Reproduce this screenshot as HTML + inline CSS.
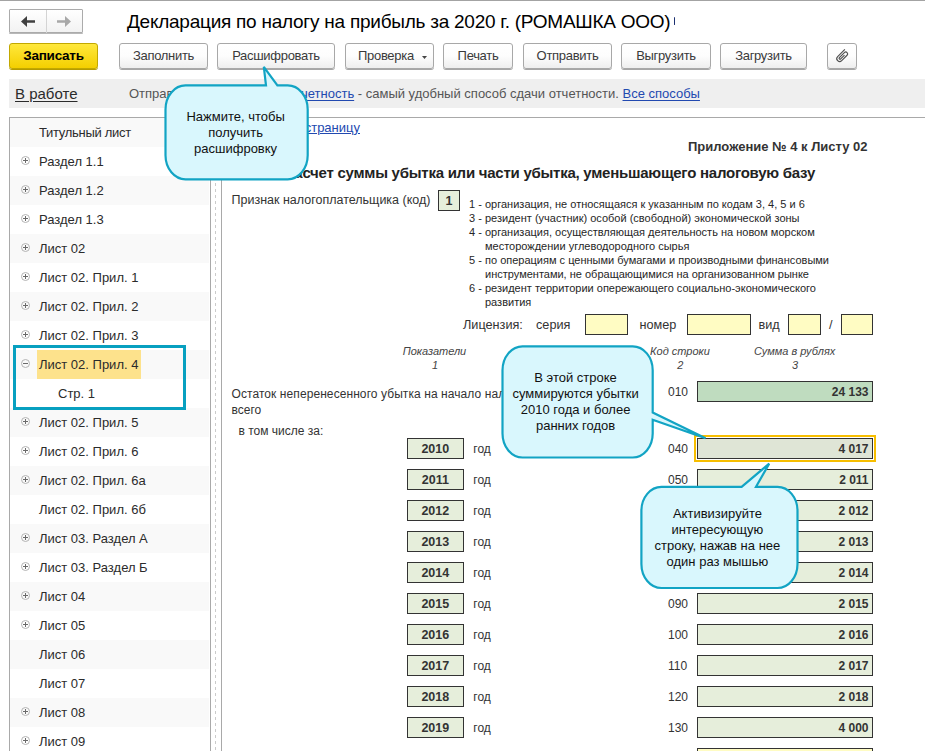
<!DOCTYPE html>
<html><head><meta charset="utf-8">
<style>
*{box-sizing:border-box;margin:0;padding:0}
html,body{width:925px;height:751px;overflow:hidden;background:#fff}
body{position:relative;font-family:"Liberation Sans",sans-serif;color:#333;font-size:13px}
.a{position:absolute;white-space:pre}
.nav{left:9px;top:9px;width:74px;height:24px;border:1px solid #ababab;border-radius:1px;background:linear-gradient(#fff,#f2f2f2);box-shadow:0 1px 0 #b8b8b8}
.btn{position:absolute;top:43px;height:26px;border:1px solid #a8a8a8;border-radius:3px;background:linear-gradient(#fff 0%,#fdfdfd 50%,#eeeeee 100%);box-shadow:0 1px 0 #a6a6a6;font-size:13px;line-height:24px;text-align:center;color:#3a3a3a;white-space:pre;letter-spacing:-0.3px}
.save{background:linear-gradient(#ffe83c,#f4cf00);border-color:#c2a800;color:#000;font-weight:bold;box-shadow:0 1px 0 #b69c00;letter-spacing:-0.25px;font-size:13.5px}
.link{color:#2249b0;text-decoration:underline}
.icon{position:absolute;width:10px;height:10px}
.icon svg{display:block}

</style></head><body>
<div class="a" style="left:0;top:0;width:925px;height:1px;background:#a3a3a3"></div>
<div class="a nav"></div>
<div class="a" style="left:46px;top:10px;width:1px;height:23px;background:#d4d4d4"></div>
<svg class="a" style="left:0;top:0" width="100" height="40">
<path d="M21 21.5 L27 16 L27 20.2 L35 20.2 L35 22.8 L27 22.8 L27 27 Z" fill="#404040"/>
<path d="M71 21.5 L65 16 L65 20.2 L57 20.2 L57 22.8 L65 22.8 L65 27 Z" fill="#a8a8a8"/>
</svg>
<div class="a" style="left:674px;top:17px;width:1.4px;height:8px;background:#1b2f70;border-radius:1px"></div>
<div class="a" style="left:127px;top:11.62px;font-size:19px;line-height:20px;color:#000;font-weight:400;font-style:normal;letter-spacing:-0.25px">Декларация по налогу на прибыль за 2020 г. (РОМАШКА ООО)</div>
<div class="btn save" style="left:9px;width:89px">Записать</div>
<div class="btn" style="left:119px;width:89px">Заполнить</div>
<div class="btn" style="left:217px;width:118px">Расшифровать</div>
<div class="btn" style="left:443px;width:70px">Печать</div>
<div class="btn" style="left:523px;width:89px">Отправить</div>
<div class="btn" style="left:621px;width:90px">Выгрузить</div>
<div class="btn" style="left:720px;width:87px">Загрузить</div>
<div class="btn" style="left:345px;width:89px;text-align:left;padding-left:12px">Проверка<svg style="position:absolute;left:76px;top:12px" width="6" height="4"><path d="M0 0 L5 0 L2.5 3 Z" fill="#444"/></svg></div>
<div class="btn" style="left:827px;width:30px"></div>
<svg class="a" style="left:0;top:0" width="925" height="100"><g transform="translate(841.9 56.2) rotate(45) translate(-3 -6.6)" fill="none" stroke="#505050" stroke-width="1.15"><path d="M0.3 -0.3 V9.9 A2.85 2.85 0 0 0 6 9.9 V2.3 A1.9 1.9 0 0 0 2.2 2.3 V9.4 A0.95 0.95 0 0 0 4.1 9.4 V4"/></g></svg>
<div class="a" style="left:9px;top:79px;width:916px;height:29px;background:#efefef"></div>
<div class="a" style="left:15px;top:83.80px;font-size:15px;line-height:20px;color:#2b2b2b;font-weight:400;font-style:normal;"><span style="text-decoration:underline;text-underline-offset:2px">В работе</span></div>
<div class="a" style="left:129px;top:84.00px;font-size:13px;line-height:20px;color:#555;font-weight:400;font-style:normal;">Отправляйте через 1С-Отчетность</div>
<div class="a" style="left:301px;top:84.00px;font-size:13px;line-height:20px;color:#555;font-weight:400;font-style:normal;background:#efefef"><span class="link" style="text-underline-offset:2px">четность</span> - самый удобный способ сдачи отчетности. <span class="link" style="text-underline-offset:2px">Все способы</span></div>
<div class="a" style="left:9px;top:117px;width:916px;height:1px;background:#a9a9a9"></div>
<div class="a" style="left:9px;top:117px;width:1px;height:640px;background:#a9a9a9"></div>
<div class="a" style="left:210px;top:117px;width:1px;height:640px;background:#a9a9a9"></div>
<div class="a" style="left:221px;top:117px;width:1px;height:640px;background:#a9a9a9"></div>
<div class="a" style="left:215px;top:118px;width:1px;height:640px;background:repeating-linear-gradient(#cbcbcb 0 2px,transparent 2px 5px,#cbcbcb 5px 6px)"></div>
<div class="a" style="left:10px;top:118px;width:199px;height:29px;background:#f9f9f9"></div>
<div class="a" style="left:39px;top:122.50px;font-size:13px;line-height:20px;color:#2b2b2b;font-weight:400;font-style:normal;letter-spacing:-0.3px">Титульный лист</div>
<svg class="a" style="left:20px;top:155px" width="11" height="11"><circle cx="5.5" cy="5.5" r="4" fill="none" stroke="#b4b4b4" stroke-width="1"/><path d="M3 5.5 H8" stroke="#6a6a6a" stroke-width="1"/><path d="M5.5 3 V8" stroke="#6a6a6a" stroke-width="1"/></svg>
<div class="a" style="left:39px;top:151.50px;font-size:13px;line-height:20px;color:#2b2b2b;font-weight:400;font-style:normal;">Раздел 1.1</div>
<div class="a" style="left:10px;top:176px;width:199px;height:29px;background:#f9f9f9"></div>
<svg class="a" style="left:20px;top:184px" width="11" height="11"><circle cx="5.5" cy="5.5" r="4" fill="none" stroke="#b4b4b4" stroke-width="1"/><path d="M3 5.5 H8" stroke="#6a6a6a" stroke-width="1"/><path d="M5.5 3 V8" stroke="#6a6a6a" stroke-width="1"/></svg>
<div class="a" style="left:39px;top:180.50px;font-size:13px;line-height:20px;color:#2b2b2b;font-weight:400;font-style:normal;">Раздел 1.2</div>
<svg class="a" style="left:20px;top:213px" width="11" height="11"><circle cx="5.5" cy="5.5" r="4" fill="none" stroke="#b4b4b4" stroke-width="1"/><path d="M3 5.5 H8" stroke="#6a6a6a" stroke-width="1"/><path d="M5.5 3 V8" stroke="#6a6a6a" stroke-width="1"/></svg>
<div class="a" style="left:39px;top:209.50px;font-size:13px;line-height:20px;color:#2b2b2b;font-weight:400;font-style:normal;">Раздел 1.3</div>
<div class="a" style="left:10px;top:234px;width:199px;height:29px;background:#f9f9f9"></div>
<svg class="a" style="left:20px;top:242px" width="11" height="11"><circle cx="5.5" cy="5.5" r="4" fill="none" stroke="#b4b4b4" stroke-width="1"/><path d="M3 5.5 H8" stroke="#6a6a6a" stroke-width="1"/><path d="M5.5 3 V8" stroke="#6a6a6a" stroke-width="1"/></svg>
<div class="a" style="left:39px;top:238.50px;font-size:13px;line-height:20px;color:#2b2b2b;font-weight:400;font-style:normal;">Лист 02</div>
<svg class="a" style="left:20px;top:271px" width="11" height="11"><circle cx="5.5" cy="5.5" r="4" fill="none" stroke="#b4b4b4" stroke-width="1"/><path d="M3 5.5 H8" stroke="#6a6a6a" stroke-width="1"/><path d="M5.5 3 V8" stroke="#6a6a6a" stroke-width="1"/></svg>
<div class="a" style="left:39px;top:267.50px;font-size:13px;line-height:20px;color:#2b2b2b;font-weight:400;font-style:normal;">Лист 02. Прил. 1</div>
<div class="a" style="left:10px;top:292px;width:199px;height:29px;background:#f9f9f9"></div>
<svg class="a" style="left:20px;top:300px" width="11" height="11"><circle cx="5.5" cy="5.5" r="4" fill="none" stroke="#b4b4b4" stroke-width="1"/><path d="M3 5.5 H8" stroke="#6a6a6a" stroke-width="1"/><path d="M5.5 3 V8" stroke="#6a6a6a" stroke-width="1"/></svg>
<div class="a" style="left:39px;top:296.50px;font-size:13px;line-height:20px;color:#2b2b2b;font-weight:400;font-style:normal;">Лист 02. Прил. 2</div>
<svg class="a" style="left:20px;top:329px" width="11" height="11"><circle cx="5.5" cy="5.5" r="4" fill="none" stroke="#b4b4b4" stroke-width="1"/><path d="M3 5.5 H8" stroke="#6a6a6a" stroke-width="1"/><path d="M5.5 3 V8" stroke="#6a6a6a" stroke-width="1"/></svg>
<div class="a" style="left:39px;top:325.50px;font-size:13px;line-height:20px;color:#2b2b2b;font-weight:400;font-style:normal;">Лист 02. Прил. 3</div>
<div class="a" style="left:10px;top:350px;width:199px;height:29px;background:#f9f9f9"></div>
<div class="a" style="left:37px;top:350px;width:104px;height:29px;background:#fde28c"></div>
<svg class="a" style="left:20px;top:358px" width="11" height="11"><circle cx="5.5" cy="5.5" r="4" fill="none" stroke="#b4b4b4" stroke-width="1"/><path d="M3 5.5 H8" stroke="#6a6a6a" stroke-width="1"/></svg>
<div class="a" style="left:39px;top:354.50px;font-size:13px;line-height:20px;color:#2b2b2b;font-weight:400;font-style:normal;">Лист 02. Прил. 4</div>
<div class="a" style="left:58px;top:383.50px;font-size:13px;line-height:20px;color:#2b2b2b;font-weight:400;font-style:normal;">Стр. 1</div>
<div class="a" style="left:10px;top:408px;width:199px;height:29px;background:#f9f9f9"></div>
<svg class="a" style="left:20px;top:416px" width="11" height="11"><circle cx="5.5" cy="5.5" r="4" fill="none" stroke="#b4b4b4" stroke-width="1"/><path d="M3 5.5 H8" stroke="#6a6a6a" stroke-width="1"/><path d="M5.5 3 V8" stroke="#6a6a6a" stroke-width="1"/></svg>
<div class="a" style="left:39px;top:412.50px;font-size:13px;line-height:20px;color:#2b2b2b;font-weight:400;font-style:normal;">Лист 02. Прил. 5</div>
<svg class="a" style="left:20px;top:445px" width="11" height="11"><circle cx="5.5" cy="5.5" r="4" fill="none" stroke="#b4b4b4" stroke-width="1"/><path d="M3 5.5 H8" stroke="#6a6a6a" stroke-width="1"/><path d="M5.5 3 V8" stroke="#6a6a6a" stroke-width="1"/></svg>
<div class="a" style="left:39px;top:441.50px;font-size:13px;line-height:20px;color:#2b2b2b;font-weight:400;font-style:normal;">Лист 02. Прил. 6</div>
<div class="a" style="left:10px;top:466px;width:199px;height:29px;background:#f9f9f9"></div>
<svg class="a" style="left:20px;top:474px" width="11" height="11"><circle cx="5.5" cy="5.5" r="4" fill="none" stroke="#b4b4b4" stroke-width="1"/><path d="M3 5.5 H8" stroke="#6a6a6a" stroke-width="1"/><path d="M5.5 3 V8" stroke="#6a6a6a" stroke-width="1"/></svg>
<div class="a" style="left:39px;top:470.50px;font-size:13px;line-height:20px;color:#2b2b2b;font-weight:400;font-style:normal;">Лист 02. Прил. 6а</div>
<div class="a" style="left:39px;top:499.50px;font-size:13px;line-height:20px;color:#2b2b2b;font-weight:400;font-style:normal;">Лист 02. Прил. 6б</div>
<div class="a" style="left:10px;top:524px;width:199px;height:29px;background:#f9f9f9"></div>
<svg class="a" style="left:20px;top:532px" width="11" height="11"><circle cx="5.5" cy="5.5" r="4" fill="none" stroke="#b4b4b4" stroke-width="1"/><path d="M3 5.5 H8" stroke="#6a6a6a" stroke-width="1"/><path d="M5.5 3 V8" stroke="#6a6a6a" stroke-width="1"/></svg>
<div class="a" style="left:39px;top:528.50px;font-size:13px;line-height:20px;color:#2b2b2b;font-weight:400;font-style:normal;">Лист 03. Раздел А</div>
<svg class="a" style="left:20px;top:561px" width="11" height="11"><circle cx="5.5" cy="5.5" r="4" fill="none" stroke="#b4b4b4" stroke-width="1"/><path d="M3 5.5 H8" stroke="#6a6a6a" stroke-width="1"/><path d="M5.5 3 V8" stroke="#6a6a6a" stroke-width="1"/></svg>
<div class="a" style="left:39px;top:557.50px;font-size:13px;line-height:20px;color:#2b2b2b;font-weight:400;font-style:normal;">Лист 03. Раздел Б</div>
<div class="a" style="left:10px;top:582px;width:199px;height:29px;background:#f9f9f9"></div>
<svg class="a" style="left:20px;top:590px" width="11" height="11"><circle cx="5.5" cy="5.5" r="4" fill="none" stroke="#b4b4b4" stroke-width="1"/><path d="M3 5.5 H8" stroke="#6a6a6a" stroke-width="1"/><path d="M5.5 3 V8" stroke="#6a6a6a" stroke-width="1"/></svg>
<div class="a" style="left:39px;top:586.50px;font-size:13px;line-height:20px;color:#2b2b2b;font-weight:400;font-style:normal;">Лист 04</div>
<svg class="a" style="left:20px;top:619px" width="11" height="11"><circle cx="5.5" cy="5.5" r="4" fill="none" stroke="#b4b4b4" stroke-width="1"/><path d="M3 5.5 H8" stroke="#6a6a6a" stroke-width="1"/><path d="M5.5 3 V8" stroke="#6a6a6a" stroke-width="1"/></svg>
<div class="a" style="left:39px;top:615.50px;font-size:13px;line-height:20px;color:#2b2b2b;font-weight:400;font-style:normal;">Лист 05</div>
<div class="a" style="left:10px;top:640px;width:199px;height:29px;background:#f9f9f9"></div>
<div class="a" style="left:39px;top:644.50px;font-size:13px;line-height:20px;color:#2b2b2b;font-weight:400;font-style:normal;">Лист 06</div>
<div class="a" style="left:39px;top:673.50px;font-size:13px;line-height:20px;color:#2b2b2b;font-weight:400;font-style:normal;">Лист 07</div>
<div class="a" style="left:10px;top:698px;width:199px;height:29px;background:#f9f9f9"></div>
<svg class="a" style="left:20px;top:706px" width="11" height="11"><circle cx="5.5" cy="5.5" r="4" fill="none" stroke="#b4b4b4" stroke-width="1"/><path d="M3 5.5 H8" stroke="#6a6a6a" stroke-width="1"/><path d="M5.5 3 V8" stroke="#6a6a6a" stroke-width="1"/></svg>
<div class="a" style="left:39px;top:702.50px;font-size:13px;line-height:20px;color:#2b2b2b;font-weight:400;font-style:normal;">Лист 08</div>
<svg class="a" style="left:20px;top:735px" width="11" height="11"><circle cx="5.5" cy="5.5" r="4" fill="none" stroke="#b4b4b4" stroke-width="1"/><path d="M3 5.5 H8" stroke="#6a6a6a" stroke-width="1"/><path d="M5.5 3 V8" stroke="#6a6a6a" stroke-width="1"/></svg>
<div class="a" style="left:39px;top:731.50px;font-size:13px;line-height:20px;color:#2b2b2b;font-weight:400;font-style:normal;">Лист 09</div>
<div class="a" style="left:13px;top:345px;width:173px;height:65px;border:3px solid #07a0c0"></div>
<div class="a" style="left:-240px;width:600px;text-align:right;top:117.50px;font-size:13px;line-height:20px;color:#333;font-weight:400;font-style:normal;"><span class="link">Добавить страницу</span></div>
<div class="a" style="left:688px;top:136.90px;font-size:13px;line-height:20px;color:#333;font-weight:700;font-style:normal;">Приложение № 4 к Листу 02</div>
<div class="a" style="left:215px;width:600px;text-align:right;top:163.40px;font-size:15px;line-height:20px;color:#222;font-weight:700;font-style:normal;letter-spacing:-0.25px">Расчет суммы убытка или части убытка, уменьшающего налоговую базу</div>
<div class="a" style="left:231.5px;top:190.37px;font-size:12.5px;line-height:20px;color:#333;font-weight:400;font-style:normal;">Признак налогоплательщика (код)</div>
<div class="a" style="left:438px;top:190px;width:22px;height:21px;background:#e6eedb;border:1px solid #333;"></div>
<div class="a" style="left:439.0px;width:20px;text-align:center;top:190.67px;font-size:12.5px;line-height:20px;color:#333;font-weight:700;font-style:normal;">1</div>
<div class="a" style="left:469px;top:194.19px;font-size:11px;line-height:20px;color:#262626;font-weight:400;font-style:normal;">1 - </div>
<div class="a" style="left:485px;top:194.19px;font-size:11px;line-height:20px;color:#262626;font-weight:400;font-style:normal;">организация, не относящаяся к указанным по кодам 3, 4, 5 и 6</div>
<div class="a" style="left:469px;top:208.19px;font-size:11px;line-height:20px;color:#262626;font-weight:400;font-style:normal;">3 - </div>
<div class="a" style="left:485px;top:208.19px;font-size:11px;line-height:20px;color:#262626;font-weight:400;font-style:normal;">резидент (участник) особой (свободной) экономической зоны</div>
<div class="a" style="left:469px;top:222.19px;font-size:11px;line-height:20px;color:#262626;font-weight:400;font-style:normal;">4 - </div>
<div class="a" style="left:485px;top:222.19px;font-size:11px;line-height:20px;color:#262626;font-weight:400;font-style:normal;">организация, осуществляющая деятельность на новом морском</div>
<div class="a" style="left:485px;top:236.19px;font-size:11px;line-height:20px;color:#262626;font-weight:400;font-style:normal;">месторождении углеводородного сырья</div>
<div class="a" style="left:469px;top:250.19px;font-size:11px;line-height:20px;color:#262626;font-weight:400;font-style:normal;">5 - </div>
<div class="a" style="left:485px;top:250.19px;font-size:11px;line-height:20px;color:#262626;font-weight:400;font-style:normal;">по операциям с ценными бумагами и производными финансовыми</div>
<div class="a" style="left:485px;top:264.19px;font-size:11px;line-height:20px;color:#262626;font-weight:400;font-style:normal;">инструментами, не обращающимися на организованном рынке</div>
<div class="a" style="left:469px;top:278.19px;font-size:11px;line-height:20px;color:#262626;font-weight:400;font-style:normal;">6 - </div>
<div class="a" style="left:485px;top:278.19px;font-size:11px;line-height:20px;color:#262626;font-weight:400;font-style:normal;">резидент территории опережающего социально-экономического</div>
<div class="a" style="left:485px;top:292.19px;font-size:11px;line-height:20px;color:#262626;font-weight:400;font-style:normal;">развития</div>
<div class="a" style="left:463px;top:315.10px;font-size:12.7px;line-height:20px;color:#333;font-weight:400;font-style:normal;">Лицензия:</div>
<div class="a" style="left:536px;top:315.10px;font-size:12.7px;line-height:20px;color:#333;font-weight:400;font-style:normal;">серия</div>
<div class="a" style="left:585px;top:314px;width:43px;height:21px;background:#fffcc3;border:1px solid #333;"></div>
<div class="a" style="left:639.5px;top:315.10px;font-size:12.7px;line-height:20px;color:#333;font-weight:400;font-style:normal;">номер</div>
<div class="a" style="left:687px;top:314px;width:64px;height:21px;background:#fffcc3;border:1px solid #333;"></div>
<div class="a" style="left:758.5px;top:315.10px;font-size:12.7px;line-height:20px;color:#333;font-weight:400;font-style:normal;">вид</div>
<div class="a" style="left:788px;top:314px;width:33px;height:21px;background:#fffcc3;border:1px solid #333;"></div>
<div class="a" style="left:829px;top:315.10px;font-size:12.7px;line-height:20px;color:#333;font-weight:400;font-style:normal;">/</div>
<div class="a" style="left:841px;top:314px;width:32px;height:21px;background:#fffcc3;border:1px solid #333;"></div>
<div class="a" style="left:334.5px;width:200px;text-align:center;top:341.19px;font-size:11px;line-height:20px;color:#444;font-weight:400;font-style:italic;">Показатели</div>
<div class="a" style="left:335.0px;width:200px;text-align:center;top:354.69px;font-size:11px;line-height:20px;color:#444;font-weight:400;font-style:italic;">1</div>
<div class="a" style="left:580.0px;width:200px;text-align:center;top:341.19px;font-size:11px;line-height:20px;color:#444;font-weight:400;font-style:italic;">Код строки</div>
<div class="a" style="left:580.2px;width:200px;text-align:center;top:354.69px;font-size:11px;line-height:20px;color:#444;font-weight:400;font-style:italic;">2</div>
<div class="a" style="left:694.6px;width:200px;text-align:center;top:341.19px;font-size:11px;line-height:20px;color:#444;font-weight:400;font-style:italic;">Сумма в рублях</div>
<div class="a" style="left:695.0px;width:200px;text-align:center;top:354.69px;font-size:11px;line-height:20px;color:#444;font-weight:400;font-style:italic;">3</div>
<div class="a" style="left:231.5px;top:384.04px;font-size:12px;line-height:20px;color:#333;font-weight:400;font-style:normal;letter-spacing:0.08px">Остаток неперенесенного убытка на начало налогового периода -</div>
<div class="a" style="left:231.5px;top:400.14px;font-size:12px;line-height:20px;color:#333;font-weight:400;font-style:normal;">всего</div>
<div class="a" style="left:668px;top:381.64px;font-size:12px;line-height:20px;color:#333;font-weight:400;font-style:normal;">010</div>
<div class="a" style="left:697px;top:381px;width:176px;height:21px;background:#bfdcbf;border:1px solid #333;"></div>
<div class="a" style="left:718.5px;width:150px;text-align:right;top:381.64px;font-size:12px;line-height:20px;color:#333;font-weight:700;font-style:normal;">24 133</div>
<div class="a" style="left:238.5px;top:421.04px;font-size:12px;line-height:20px;color:#333;font-weight:400;font-style:normal;">в том числе за:</div>
<div class="a" style="left:407px;top:438px;width:57px;height:21px;background:#e6eedb;border:1px solid #333;"></div>
<div class="a" style="left:406.8px;width:57px;text-align:center;top:438.67px;font-size:12.5px;line-height:20px;color:#333;font-weight:700;font-style:normal;">2010</div>
<div class="a" style="left:473.3px;top:438.84px;font-size:12px;line-height:20px;color:#333;font-weight:400;font-style:normal;">год</div>
<div class="a" style="left:668px;top:438.84px;font-size:12px;line-height:20px;color:#333;font-weight:400;font-style:normal;">040</div>
<div class="a" style="left:694px;top:435px;width:182px;height:27px;border:2px solid #f7be00"></div>
<div class="a" style="left:697px;top:438px;width:176px;height:21px;background:#dfe5d6;border:1px solid #333;"></div>
<div class="a" style="left:718.5px;width:150px;text-align:right;top:438.84px;font-size:12px;line-height:20px;color:#333;font-weight:700;font-style:normal;">4 017</div>
<div class="a" style="left:407px;top:469px;width:57px;height:21px;background:#e6eedb;border:1px solid #333;"></div>
<div class="a" style="left:406.8px;width:57px;text-align:center;top:469.67px;font-size:12.5px;line-height:20px;color:#333;font-weight:700;font-style:normal;">2011</div>
<div class="a" style="left:473.3px;top:469.84px;font-size:12px;line-height:20px;color:#333;font-weight:400;font-style:normal;">год</div>
<div class="a" style="left:668px;top:469.84px;font-size:12px;line-height:20px;color:#333;font-weight:400;font-style:normal;">050</div>
<div class="a" style="left:697px;top:469px;width:176px;height:21px;background:#e6eedb;border:1px solid #333;"></div>
<div class="a" style="left:718.5px;width:150px;text-align:right;top:469.84px;font-size:12px;line-height:20px;color:#333;font-weight:700;font-style:normal;">2 011</div>
<div class="a" style="left:407px;top:500px;width:57px;height:21px;background:#e6eedb;border:1px solid #333;"></div>
<div class="a" style="left:406.8px;width:57px;text-align:center;top:500.67px;font-size:12.5px;line-height:20px;color:#333;font-weight:700;font-style:normal;">2012</div>
<div class="a" style="left:473.3px;top:500.84px;font-size:12px;line-height:20px;color:#333;font-weight:400;font-style:normal;">год</div>
<div class="a" style="left:668px;top:500.84px;font-size:12px;line-height:20px;color:#333;font-weight:400;font-style:normal;">060</div>
<div class="a" style="left:697px;top:500px;width:176px;height:21px;background:#e6eedb;border:1px solid #333;"></div>
<div class="a" style="left:718.5px;width:150px;text-align:right;top:500.84px;font-size:12px;line-height:20px;color:#333;font-weight:700;font-style:normal;">2 012</div>
<div class="a" style="left:407px;top:531px;width:57px;height:21px;background:#e6eedb;border:1px solid #333;"></div>
<div class="a" style="left:406.8px;width:57px;text-align:center;top:531.67px;font-size:12.5px;line-height:20px;color:#333;font-weight:700;font-style:normal;">2013</div>
<div class="a" style="left:473.3px;top:531.84px;font-size:12px;line-height:20px;color:#333;font-weight:400;font-style:normal;">год</div>
<div class="a" style="left:668px;top:531.84px;font-size:12px;line-height:20px;color:#333;font-weight:400;font-style:normal;">070</div>
<div class="a" style="left:697px;top:531px;width:176px;height:21px;background:#e6eedb;border:1px solid #333;"></div>
<div class="a" style="left:718.5px;width:150px;text-align:right;top:531.84px;font-size:12px;line-height:20px;color:#333;font-weight:700;font-style:normal;">2 013</div>
<div class="a" style="left:407px;top:562px;width:57px;height:21px;background:#e6eedb;border:1px solid #333;"></div>
<div class="a" style="left:406.8px;width:57px;text-align:center;top:562.67px;font-size:12.5px;line-height:20px;color:#333;font-weight:700;font-style:normal;">2014</div>
<div class="a" style="left:473.3px;top:562.84px;font-size:12px;line-height:20px;color:#333;font-weight:400;font-style:normal;">год</div>
<div class="a" style="left:668px;top:562.84px;font-size:12px;line-height:20px;color:#333;font-weight:400;font-style:normal;">080</div>
<div class="a" style="left:697px;top:562px;width:176px;height:21px;background:#e6eedb;border:1px solid #333;"></div>
<div class="a" style="left:718.5px;width:150px;text-align:right;top:562.84px;font-size:12px;line-height:20px;color:#333;font-weight:700;font-style:normal;">2 014</div>
<div class="a" style="left:407px;top:593px;width:57px;height:21px;background:#e6eedb;border:1px solid #333;"></div>
<div class="a" style="left:406.8px;width:57px;text-align:center;top:593.67px;font-size:12.5px;line-height:20px;color:#333;font-weight:700;font-style:normal;">2015</div>
<div class="a" style="left:473.3px;top:593.84px;font-size:12px;line-height:20px;color:#333;font-weight:400;font-style:normal;">год</div>
<div class="a" style="left:668px;top:593.84px;font-size:12px;line-height:20px;color:#333;font-weight:400;font-style:normal;">090</div>
<div class="a" style="left:697px;top:593px;width:176px;height:21px;background:#e6eedb;border:1px solid #333;"></div>
<div class="a" style="left:718.5px;width:150px;text-align:right;top:593.84px;font-size:12px;line-height:20px;color:#333;font-weight:700;font-style:normal;">2 015</div>
<div class="a" style="left:407px;top:624px;width:57px;height:21px;background:#e6eedb;border:1px solid #333;"></div>
<div class="a" style="left:406.8px;width:57px;text-align:center;top:624.67px;font-size:12.5px;line-height:20px;color:#333;font-weight:700;font-style:normal;">2016</div>
<div class="a" style="left:473.3px;top:624.84px;font-size:12px;line-height:20px;color:#333;font-weight:400;font-style:normal;">год</div>
<div class="a" style="left:668px;top:624.84px;font-size:12px;line-height:20px;color:#333;font-weight:400;font-style:normal;">100</div>
<div class="a" style="left:697px;top:624px;width:176px;height:21px;background:#e6eedb;border:1px solid #333;"></div>
<div class="a" style="left:718.5px;width:150px;text-align:right;top:624.84px;font-size:12px;line-height:20px;color:#333;font-weight:700;font-style:normal;">2 016</div>
<div class="a" style="left:407px;top:655px;width:57px;height:21px;background:#e6eedb;border:1px solid #333;"></div>
<div class="a" style="left:406.8px;width:57px;text-align:center;top:655.67px;font-size:12.5px;line-height:20px;color:#333;font-weight:700;font-style:normal;">2017</div>
<div class="a" style="left:473.3px;top:655.84px;font-size:12px;line-height:20px;color:#333;font-weight:400;font-style:normal;">год</div>
<div class="a" style="left:668px;top:655.84px;font-size:12px;line-height:20px;color:#333;font-weight:400;font-style:normal;">110</div>
<div class="a" style="left:697px;top:655px;width:176px;height:21px;background:#e6eedb;border:1px solid #333;"></div>
<div class="a" style="left:718.5px;width:150px;text-align:right;top:655.84px;font-size:12px;line-height:20px;color:#333;font-weight:700;font-style:normal;">2 017</div>
<div class="a" style="left:407px;top:686px;width:57px;height:21px;background:#e6eedb;border:1px solid #333;"></div>
<div class="a" style="left:406.8px;width:57px;text-align:center;top:686.67px;font-size:12.5px;line-height:20px;color:#333;font-weight:700;font-style:normal;">2018</div>
<div class="a" style="left:473.3px;top:686.84px;font-size:12px;line-height:20px;color:#333;font-weight:400;font-style:normal;">год</div>
<div class="a" style="left:668px;top:686.84px;font-size:12px;line-height:20px;color:#333;font-weight:400;font-style:normal;">120</div>
<div class="a" style="left:697px;top:686px;width:176px;height:21px;background:#e6eedb;border:1px solid #333;"></div>
<div class="a" style="left:718.5px;width:150px;text-align:right;top:686.84px;font-size:12px;line-height:20px;color:#333;font-weight:700;font-style:normal;">2 018</div>
<div class="a" style="left:407px;top:717px;width:57px;height:21px;background:#e6eedb;border:1px solid #333;"></div>
<div class="a" style="left:406.8px;width:57px;text-align:center;top:717.67px;font-size:12.5px;line-height:20px;color:#333;font-weight:700;font-style:normal;">2019</div>
<div class="a" style="left:473.3px;top:717.84px;font-size:12px;line-height:20px;color:#333;font-weight:400;font-style:normal;">год</div>
<div class="a" style="left:668px;top:717.84px;font-size:12px;line-height:20px;color:#333;font-weight:400;font-style:normal;">130</div>
<div class="a" style="left:697px;top:717px;width:176px;height:21px;background:#e6eedb;border:1px solid #333;"></div>
<div class="a" style="left:718.5px;width:150px;text-align:right;top:717.84px;font-size:12px;line-height:20px;color:#333;font-weight:700;font-style:normal;">4 000</div>
<div class="a" style="left:697px;top:748px;width:176px;height:21px;background:#fffcc3;border:1px solid #333;"></div>
<svg class="a" style="left:0;top:0" width="925" height="751"><path d="M185.5 85.4 L266 85.4 L263.8 66.8 L277.4 85.4 L287.7 85.4 A20 24 0 0 1 307.7 109.4 L307.7 155.3 A20 24 0 0 1 287.7 179.3 L185.5 179.3 A20 24 0 0 1 165.5 155.3 L165.5 109.4 A20 24 0 0 1 185.5 85.4 Z" fill="#d9f7fd" stroke="#12a4c4" stroke-width="2.2" stroke-linejoin="miter" stroke-miterlimit="3"/></svg><div class="a" style="left:154.5px;width:162.2px;text-align:center;top:107.00px;font-size:13px;line-height:20px;color:#111;font-weight:400;font-style:normal;">Нажмите, чтобы</div><div class="a" style="left:154.5px;width:162.2px;text-align:center;top:123.00px;font-size:13px;line-height:20px;color:#111;font-weight:400;font-style:normal;">получить</div><div class="a" style="left:154.5px;width:162.2px;text-align:center;top:139.00px;font-size:13px;line-height:20px;color:#111;font-weight:400;font-style:normal;">расшифровку</div>
<svg class="a" style="left:0;top:0" width="925" height="751"><path d="M522.5 346.3 L632.7 346.3 A20 24 0 0 1 652.7 370.3 L652.7 412.5 L705.6 438.3 L652.7 419.7 L652.7 433.5 A20 24 0 0 1 632.7 457.5 L522.5 457.5 A20 24 0 0 1 502.5 433.5 L502.5 370.3 A20 24 0 0 1 522.5 346.3 Z" fill="#d9f7fd" stroke="#12a4c4" stroke-width="2.2" stroke-linejoin="miter" stroke-miterlimit="3"/></svg><div class="a" style="left:490.5px;width:170.20000000000005px;text-align:center;top:367.50px;font-size:13px;line-height:20px;color:#111;font-weight:400;font-style:normal;">В этой строке</div><div class="a" style="left:490.5px;width:170.20000000000005px;text-align:center;top:383.50px;font-size:13px;line-height:20px;color:#111;font-weight:400;font-style:normal;">суммируются убытки</div><div class="a" style="left:490.5px;width:170.20000000000005px;text-align:center;top:399.50px;font-size:13px;line-height:20px;color:#111;font-weight:400;font-style:normal;">2010 года и более</div><div class="a" style="left:490.5px;width:170.20000000000005px;text-align:center;top:415.50px;font-size:13px;line-height:20px;color:#111;font-weight:400;font-style:normal;">ранних годов</div>
<svg class="a" style="left:0;top:0" width="925" height="751"><path d="M661.4 486.8 L741.6 486.8 L769.2 463.6 L756 486.8 L777.5 486.8 A20 24 0 0 1 797.5 510.8 L797.5 564 A20 24 0 0 1 777.5 588 L661.4 588 A20 24 0 0 1 641.4 564 L641.4 510.8 A20 24 0 0 1 661.4 486.8 Z" fill="#d9f7fd" stroke="#12a4c4" stroke-width="2.2" stroke-linejoin="miter" stroke-miterlimit="3"/></svg><div class="a" style="left:629.4000000000001px;width:176.10000000000002px;text-align:center;top:503.50px;font-size:13px;line-height:20px;color:#111;font-weight:400;font-style:normal;">Активизируйте</div><div class="a" style="left:629.4000000000001px;width:176.10000000000002px;text-align:center;top:519.50px;font-size:13px;line-height:20px;color:#111;font-weight:400;font-style:normal;">интересующую</div><div class="a" style="left:629.4000000000001px;width:176.10000000000002px;text-align:center;top:535.50px;font-size:13px;line-height:20px;color:#111;font-weight:400;font-style:normal;">строку, нажав на нее</div><div class="a" style="left:629.4000000000001px;width:176.10000000000002px;text-align:center;top:551.50px;font-size:13px;line-height:20px;color:#111;font-weight:400;font-style:normal;">один раз мышью</div>
</body></html>
